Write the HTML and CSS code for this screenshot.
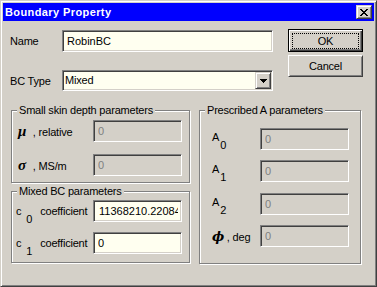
FILE: index.html
```html
<!DOCTYPE html>
<html>
<head>
<meta charset="utf-8">
<title>Boundary Property</title>
<link rel="stylesheet" href="styles.css">
</head>
<body>
<div class="window">
    <div class="titlebar">
        <span class="title">Boundary Property</span>
        <span class="capbtn raised">
            <svg width="8" height="7" viewBox="0 0 8 7" shape-rendering="crispEdges"><path d="M0 0h2v1h-2zM6 0h2v1h-2zM1 1h2v1h-2zM5 1h2v1h-2zM2 2h4v1h-4zM3 3h2v1h-2zM2 4h4v1h-4zM1 5h2v1h-2zM5 5h2v1h-2zM0 6h2v1h-2zM6 6h2v1h-2z" fill="#000"/></svg>
        </span>
    </div>
    <div class="client">
        <div class="top">
            <div class="form">
                <div class="row">
                    <label class="lbl">Name</label>
                    <input class="edit wide" type="text" value="RobinBC">
                </div>
                <div class="row typerow">
                    <label class="lbl">BC Type</label>
                    <div class="combo">
                        <span class="combo-text">Mixed</span>
                        <span class="combo-btn raised">
                            <svg width="7" height="4" viewBox="0 0 7 4" shape-rendering="crispEdges"><path d="M0 0h7v1h-7zM1 1h5v1h-5zM2 2h3v1h-3zM3 3h1v1h-1z" fill="#000"/></svg>
                        </span>
                    </div>
                </div>
            </div>
            <div class="buttons">
                <button class="btn default"><span class="focus">OK</span></button>
                <button class="btn cancel">Cancel</button>
            </div>
        </div>

        <div class="bottom">
            <div class="col-left">
                <div class="group skin">
                    <div class="gtitle">Small skin depth parameters</div>
                    <div class="grow g1">
                        <label class="glbl"><span class="greek">&#956;</span> , relative</label>
                        <input class="edit off" type="text" value="0" disabled>
                    </div>
                    <div class="grow g1 next12">
                        <label class="glbl"><span class="greek">&#963;</span> , MS/m</label>
                        <input class="edit off" type="text" value="0" disabled>
                    </div>
                </div>
                <div class="group mixed">
                    <div class="gtitle">Mixed BC parameters</div>
                    <div class="grow g2">
                        <label class="glbl">c<span class="sub">0</span><span class="word">coefficient</span></label>
                        <input class="edit long" type="text" value="11368210.22084">
                    </div>
                    <div class="grow g2 next10">
                        <label class="glbl">c<span class="sub">1</span><span class="word">coefficient</span></label>
                        <input class="edit" type="text" value="0">
                    </div>
                </div>
            </div>
            <div class="group prescribed">
                <div class="gtitle">Prescribed A parameters</div>
                <div class="grow g3">
                    <label class="glbl albl">A<span class="sub asub">0</span></label>
                    <input class="edit off" type="text" value="0" disabled>
                </div>
                <div class="grow g3 next10">
                    <label class="glbl albl">A<span class="sub asub">1</span></label>
                    <input class="edit off" type="text" value="0" disabled>
                </div>
                <div class="grow g3 next11">
                    <label class="glbl albl">A<span class="sub asub">2</span></label>
                    <input class="edit off" type="text" value="0" disabled>
                </div>
                <div class="grow g3 next10">
                    <label class="glbl"><span class="greek phi">&#981;</span> , deg</label>
                    <input class="edit off" type="text" value="0" disabled>
                </div>
            </div>
        </div>
    </div>
</div>
</body>
</html>
```

FILE: styles.css
```css
html, body {
margin:0;
padding:0;
background:#d4d0c8;
}
body {
font-family:"Liberation Sans", Arial, sans-serif;
font-size:11px;
letter-spacing:-0.2px;
color:#000;
}
/* window frame */
.window {
width:377px;
height:287px;
box-sizing:border-box;
border:1px solid;
border-color:#d4d0c8 #404040 #404040 #d4d0c8;
box-shadow:inset 1px 1px #fff, inset -1px -1px #808080;
padding:2px;
background:#d4d0c8;
}
.titlebar {
height:18px;
background:#0000ff;
display:flex;
align-items:center;
justify-content:space-between;
}
.title {
color:#fff;
font-weight:bold;
letter-spacing:0.4px;
padding-left:2px;
line-height:18px;
}
.raised {
box-sizing:border-box;
border:1px solid;
border-color:#d4d0c8 #404040 #404040 #d4d0c8;
box-shadow:inset 1px 1px #fff, inset -1px -1px #808080;
background:#d4d0c8;
display:flex;
align-items:center;
justify-content:center;
}
.capbtn {
width:16px;
height:14px;
margin-right:2px;
}
.capbtn svg {
margin-left:-1px;
}
/* client area */
.client {
padding:9px 0 0 7px;
}
.top {
display:flex;
align-items:flex-start;
}
.form {
width:263px;
}
.row {
display:flex;
align-items:center;
height:22px;
}
.typerow {
margin-top:18px;
height:21px;
}
.lbl {
width:52px;
}
.edit {
box-sizing:border-box;
width:89px;
height:22px;
margin:0;
padding:0 1px 0 4px;
border:1px solid;
border-color:#808080 #fff #fff #808080;
box-shadow:inset 1px 1px #404040, inset -1px -1px #d4d0c8;
background:#fffff0;
font:inherit;
letter-spacing:0;
color:#000;
outline:none;
}
.wide {
width:211px;
}
.long {
padding:0 3px 0 5px;
}
.edit.off {
background:#d4d0c8;
color:#808080;
-webkit-text-fill-color:#808080;
opacity:1;
}
.combo {
box-sizing:border-box;
width:211px;
height:21px;
border:1px solid;
border-color:#808080 #fff #fff #808080;
box-shadow:inset 1px 1px #404040, inset -1px -1px #d4d0c8;
background:#fffff0;
padding:1px;
display:flex;
}
.combo-text {
flex:1;
padding-left:1px;
line-height:17px;
}
.combo-btn {
width:16px;
height:17px;
}
.combo-btn svg {
margin-top:1px;
}
/* push buttons */
.buttons {
margin-left:15px;
margin-top:-1px;
display:flex;
flex-direction:column;
}
.btn {
box-sizing:border-box;
width:75px;
height:23px;
margin:0;
padding:0;
font:inherit;
letter-spacing:inherit;
color:#000;
background:#d4d0c8;
border:1px solid;
border-color:#fff #404040 #404040 #fff;
box-shadow:inset 1px 1px #d4d0c8, inset -1px -1px #808080;
}
.btn.default {
border:1px solid #000;
box-shadow:inset 1px 1px #fff, inset -1px -1px #404040, inset -2px -2px #808080;
display:flex;
padding:3px 3px 2px 3px;
}
.focus {
flex:1;
border:1px dotted #000;
display:flex;
align-items:center;
justify-content:center;
}
.cancel {
margin-top:3px;
height:22px;
}
/* group boxes */
.bottom {
margin-top:19px;
margin-left:1px;
display:flex;
align-items:flex-start;
gap:9px;
}
.col-left {
width:179px;
display:flex;
flex-direction:column;
gap:8px;
}
.group {
box-sizing:border-box;
border:1px solid #808080;
box-shadow:inset 1px 1px #fff, 1px 1px #fff;
}
.skin {
height:73px;
}
.mixed {
height:72px;
}
.prescribed {
width:162px;
height:154px;
}
.gtitle {
width:fit-content;
height:13px;
line-height:13px;
margin:-7px 0 3px 5px;
padding:0 2px;
background:#d4d0c8;
}
.mixed .gtitle {
margin-bottom:2px;
}
.prescribed .gtitle {
margin-bottom:11px;
}
.grow {
display:flex;
align-items:center;
height:22px;
}
.glbl {
height:13px;
line-height:13px;
white-space:nowrap;
}
.g1 {
padding-left:6px;
}
.g1 .glbl {
width:75px;
}
.g2 {
padding-left:4px;
}
.g2 .glbl {
width:77px;
}
.g3 {
padding-left:12px;
}
.g3 .glbl {
width:48px;
}
.next10 {
margin-top:10px;
}
.next11 {
margin-top:11px;
}
.next12 {
margin-top:12px;
}
.greek {
display:inline-block;
width:12px;
font-family:"Liberation Serif", "DejaVu Serif", serif;
font-weight:bold;
font-style:italic;
font-size:15px;
}
.phi {
width:12px;
font-family:"DejaVu Serif", serif;
font-size:13px;
}
.sub {
margin-left:5px;
vertical-align:-8px;
}
.asub {
margin-left:1px;
}
.albl {
margin-top:-3px;
}
.word {
margin-left:8px;
}
```
